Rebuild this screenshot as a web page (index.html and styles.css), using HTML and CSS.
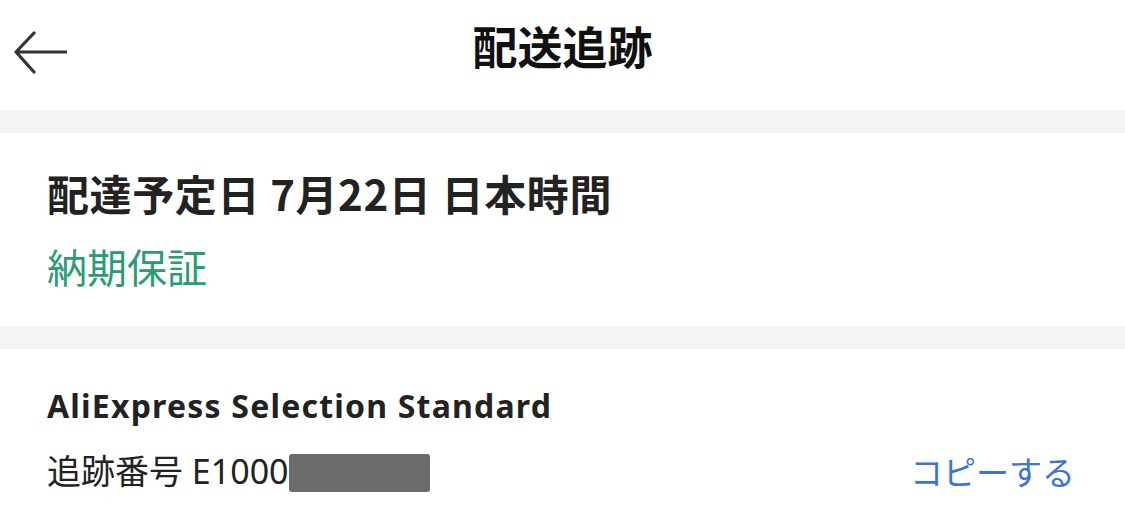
FILE: index.html
```html
<!DOCTYPE html>
<html lang="ja">
<head>
    <meta charset="UTF-8">
    <meta name="viewport" content="width=device-width, initial-scale=1.0">
    <title>配送追跡</title>
    <link rel="stylesheet" href="styles.css">
</head>
<body>

    <!-- Top bar -->
    <div class="topbar">
        <button class="back-btn" aria-label="戻る">
            <svg width="56" height="56" viewBox="0 0 56 56">
                <path d="M5 28 H55 M23 9 L5 28 L23 48" fill="none" stroke="#333" stroke-width="3.2" stroke-linecap="round" stroke-linejoin="round"/>
            </svg>
        </button>
        <h1 class="title">配送追跡</h1>
        <div></div>
    </div>

    <div class="divider"></div>

    <!-- Delivery estimate -->
    <div class="card eta">
        <div class="eta-date">配達予定日 7月22日 日本時間</div>
        <div class="eta-note">納期保証</div>
    </div>

    <div class="divider"></div>

    <!-- Carrier info -->
    <div class="card carrier">
        <div class="carrier-name">AliExpress Selection Standard</div>
        <div class="tracking-row">
            <div class="tracking-no">追跡番号 E1000<span class="redacted"></span></div>
            <a class="copy-link" href="#">コピーする</a>
        </div>
    </div>

</body>
</html>
```

FILE: styles.css
```css
body {
    margin: 0;
    background: #fff;
    color: #1f1f1f;
    font-family: "Noto Sans", "Noto Sans CJK JP", sans-serif;
}
.topbar {
    height: 110px;
    display: grid;
    grid-template-columns: 1fr auto 1fr;
    align-items: center;
}
.back-btn {
    justify-self: start;
    margin-left: 11px;
    margin-top: -6px;
    padding: 0;
    border: none;
    background: none;
    width: 56px;
    height: 56px;
    cursor: pointer;
}
.title {
    margin: 0;
    margin-top: -20px;
    font-size: 45px;
    font-weight: 700;
    color: #111;
    font-family: "Noto Sans CJK JP", sans-serif;
}
.divider {
    height: 23px;
    background: #f4f4f4;
}
.card {
    padding: 0 50px 0 47px;
}
.eta {
    padding-top: 30px;
    padding-bottom: 32px;
}
.eta-date {
    font-family: "Noto Sans CJK JP", sans-serif;
    font-size: 42px;
    font-weight: 700;
    letter-spacing: 0.6px;
    line-height: 60px;
    color: #222;
}
.eta-note {
    margin-top: 15px;
    font-family: "Noto Sans CJK JP", sans-serif;
    font-size: 40px;
    line-height: 56px;
    color: #2a9b74;
}
.carrier {
    padding-top: 33px;
}
.carrier-name {
    font-size: 32px;
    font-weight: 700;
    letter-spacing: 1.2px;
    line-height: 48px;
    color: #222;
}
.tracking-row {
    margin-top: 17px;
    display: flex;
    justify-content: space-between;
    align-items: center;
    line-height: 48px;
}
.tracking-no {
    font-size: 34px;
    color: #222;
}
.redacted {
    display: inline-block;
    width: 141px;
    height: 38px;
    background: #6b6b6b;
    border-radius: 3px;
    vertical-align: middle;
    margin-top: -4px;
}
.copy-link {
    font-family: "Noto Sans CJK JP", sans-serif;
    font-size: 33px;
    color: #3c74d4;
    text-decoration: none;
}
```
